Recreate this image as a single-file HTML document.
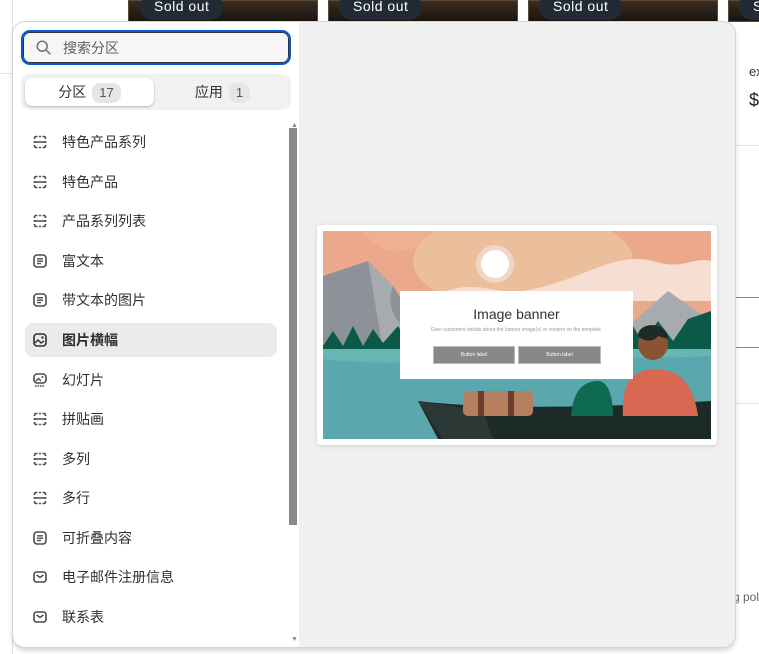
<!DOCTYPE html>
<html><head><meta charset="utf-8"><style>
*{box-sizing:border-box;margin:0;padding:0}
body{width:759px;height:654px;overflow:hidden;background:#fff;font-family:"Liberation Sans","Noto Sans CJK SC",sans-serif;position:relative}
.tile{position:absolute;top:0;height:22px;background:linear-gradient(#3a2c22,#1a1410);border:1px solid #5a4a35}
.pill{position:absolute;top:-6px;height:26px;border-radius:13px;background:#222a35;color:#fff;font-size:14px;line-height:24px;padding:0 14px;letter-spacing:.5px}
.pop{position:absolute;left:13px;top:22px;width:722px;height:625px;border-radius:12px;background:#f0f0f0;overflow:hidden;box-shadow:0 0 0 1px #d4d4d4,0 3px 6px rgba(0,0,0,.2)}
.left{position:absolute;left:0;top:0;width:286px;height:625px;background:#fff}
.search{position:absolute;left:8px;top:8px;width:270px;height:35px;border:2px solid #005bd3;border-radius:9px;background:#f6f6f6;box-shadow:inset 0 0 0 1px #333}
.search span{position:absolute;left:40px;top:6px;font-size:14px;color:#616161}
.tabs{position:absolute;left:8px;top:52px;width:270px;height:36px;background:#f1f1f1;border-radius:9px}
.tab{position:absolute;top:4px;height:28px;width:129px;border-radius:7px;font-size:14px;color:#303030;text-align:center;line-height:28px}
.tab.a{left:4px;background:#fff;box-shadow:0 1px 2px rgba(0,0,0,.25)}
.badge{display:inline-block;background:#e6e6e6;border-radius:8px;padding:0 7px;font-size:13px;line-height:20px;margin-left:6px;color:#555}
.item{position:absolute;left:12px;width:252px;height:34px;border-radius:8px;font-size:14px;color:#303030;line-height:34px;padding-left:37px}
.item.sel{background:#ebebeb;font-weight:bold}
.item svg{position:absolute;left:8px;top:10px}
.sb{position:absolute;left:276px;top:106px;width:8px;height:397px;background:#8a8a8a}
</style></head><body>
<svg width="0" height="0" style="position:absolute"><defs>
<symbol id="dash" viewBox="0 0 14 14"><path d="M1.5 4V3A1.5 1.5 0 0 1 3 1.5H4.5M6 1.5H8M9.5 1.5H11A1.5 1.5 0 0 1 12.5 3V4M1.5 10V11A1.5 1.5 0 0 0 3 12.5H4.5M6 12.5H8M9.5 12.5H11A1.5 1.5 0 0 0 12.5 11V10M1.5 6V8M12.5 6V8M1.5 7H12.5" fill="none" stroke="#4a4a4a" stroke-width="1.6"/></symbol>
<symbol id="txt" viewBox="0 0 14 14"><rect x="1" y="1" width="12" height="12" rx="3" fill="none" stroke="#4a4a4a" stroke-width="1.6"/><path d="M4 4.8H10M4 7.2H10M4 9.6H8" stroke="#4a4a4a" stroke-width="1.4"/></symbol>
<symbol id="mail" viewBox="0 0 14 14"><rect x="1" y="2" width="12" height="10" rx="2.5" fill="none" stroke="#4a4a4a" stroke-width="1.6"/><path d="M3.5 5L7 7.5L10.5 5" fill="none" stroke="#4a4a4a" stroke-width="1.4"/></symbol>
</defs></svg>
<div style="position:absolute;left:0;top:0;width:13px;height:654px;background:#fff;border-right:1px solid #e3e3e3"></div>
<div style="position:absolute;left:0;top:73px;width:40px;height:1px;background:#e3e3e3"></div>
<div class="tile" style="left:128px;width:190px"></div>
<div class="tile" style="left:328px;width:190px"></div>
<div class="tile" style="left:528px;width:190px"></div>
<div class="tile" style="left:728px;width:40px"></div>
<div class="pill" style="left:140px">Sold out</div>
<div class="pill" style="left:339px">Sold out</div>
<div class="pill" style="left:539px">Sold out</div>
<div class="pill" style="left:739px">S</div>
<div style="position:absolute;left:749px;top:64px;font-size:13px;color:#333">ex</div>
<div style="position:absolute;left:749px;top:90px;font-size:18px;color:#222">$</div>
<div style="position:absolute;left:735px;top:145px;width:30px;height:1px;background:#e3e3e3"></div>
<div style="position:absolute;left:735px;top:297px;width:30px;height:1px;background:#888"></div>
<div style="position:absolute;left:735px;top:347px;width:30px;height:1px;background:#888"></div>
<div style="position:absolute;left:735px;top:403px;width:30px;height:1px;background:#e3e3e3"></div>
<div style="position:absolute;left:733px;top:590px;font-size:12px;color:#666;white-space:nowrap">g pol</div>

<div class="pop">
<div class="left">
<div class="search"><svg width="18" height="18" style="position:absolute;left:12px;top:7px" viewBox="0 0 20 20"><circle cx="8" cy="8" r="5.5" fill="none" stroke="#777" stroke-width="1.8"/><path d="M12 12l4.5 4.5" stroke="#777" stroke-width="1.8" stroke-linecap="round"/></svg><span>搜索分区</span></div>
<div class="tabs"><div class="tab a">分区<span class="badge">17</span></div><div class="tab" style="left:137px">应用<span class="badge">1</span></div></div>
<div style="position:absolute;left:278px;top:100px;font-size:7px;color:#888">▲</div>
<div class="sb"></div>
<div style="position:absolute;left:278px;top:614px;font-size:7px;color:#888">▼</div>
</div>
<div style="position:absolute;left:304px;top:203px;width:400px;height:220px;background:#fff;border-radius:4px;box-shadow:0 1px 4px rgba(0,0,0,.15)">
<svg width="388" height="208" style="position:absolute;left:6px;top:6px" viewBox="0 0 388 208">
<rect width="388" height="208" fill="#eba88a"/>
<path d="M40 0 C60 30 90 20 110 10 L110 0Z" fill="#eeb08f"/>
<ellipse cx="200" cy="30" rx="110" ry="50" fill="#ebbf9c"/>
<path d="M100 75 C140 40 170 65 200 60 C260 50 290 20 330 30 C360 40 370 25 388 30 V70 H100Z" fill="#f6dfd2"/>
<circle cx="172" cy="33" r="19" fill="#f1d6c8"/><circle cx="172" cy="33" r="14" fill="#fff"/>
<path d="M0 45 L45 30 L70 55 C80 70 90 90 110 100 L110 130 H0Z" fill="#8d9298"/>
<path d="M45 30 L70 55 C60 80 80 100 100 110 L60 120 Z" fill="#a7aaaf"/>
<path d="M300 100 L345 60 L388 90 V130 H300Z" fill="#a7aaaf"/>
<path d="M0 115 L10 100 L20 115 L30 95 L40 115 L50 98 L60 112 L75 95 L90 120 H0Z M300 120 L310 95 L320 112 L335 90 L350 110 L365 88 L388 80 V125 H300Z" fill="#0b5a48"/>
<rect x="0" y="118" width="388" height="90" fill="#5aa8ae"/>
<path d="M0 118 H388 V125 C300 130 250 120 200 125 C120 130 60 135 0 128Z" fill="#66b6b4"/>
<path d="M95 170 C180 180 300 175 388 170 V208 H115Z" fill="#1c2b28"/>
<path d="M95 170 L160 180 L170 208 H120Z" fill="#2b3836"/>
<rect x="140" y="160" width="70" height="25" rx="5" fill="#b57f5f"/>
<rect x="155" y="160" width="6" height="25" fill="#6b3b2b"/><rect x="185" y="160" width="6" height="25" fill="#6b3b2b"/>
<path d="M248 185 C250 160 260 150 275 150 C285 150 290 165 290 185Z" fill="#0e6a50"/>
<path d="M300 185 C298 150 310 140 330 138 C355 138 370 150 375 185Z" fill="#d96853"/>
<ellipse cx="330" cy="113" rx="15" ry="16" fill="#8b5335"/>
<path d="M315 105 C315 90 345 90 345 108 L335 105 C330 112 320 110 315 105Z" fill="#1d2a25"/>
</svg>
<div style="position:absolute;left:83px;top:66px;width:233px;height:88px;background:#fff;text-align:center">
<div style="font-size:14px;color:#333;margin-top:15px">Image banner</div>
<div style="font-size:5px;color:#999;margin-top:5px">Give customers details about the banner image(s) or content on the template.</div>
<div style="position:absolute;left:33px;top:55px;width:82px;height:18px;background:#888;border:1px solid #bbb;color:#fff;font-size:5px;line-height:16px">Button label</div>
<div style="position:absolute;left:118px;top:55px;width:83px;height:18px;background:#888;border:1px solid #bbb;color:#fff;font-size:5px;line-height:16px">Button label</div>
</div>
</div>
</div>

<div style="position:absolute;left:13px;top:22px">
<div class="item" style="top:103px"><svg width="14" height="14"><use href="#dash"/></svg>特色产品系列</div>
<div class="item" style="top:143px"><svg width="14" height="14"><use href="#dash"/></svg>特色产品</div>
<div class="item" style="top:182px"><svg width="14" height="14"><use href="#dash"/></svg>产品系列列表</div>
<div class="item" style="top:222px"><svg width="14" height="14"><use href="#txt"/></svg>富文本</div>
<div class="item" style="top:261px"><svg width="14" height="14"><use href="#txt"/></svg>带文本的图片</div>
<div class="item sel" style="top:301px"><svg width="14" height="14" viewBox="0 0 14 14"><rect x="1" y="1" width="12" height="12" rx="3" fill="none" stroke="#303030" stroke-width="1.6"/><path d="M2 10L5 7L8 10L11 8" fill="none" stroke="#303030" stroke-width="1.4"/><circle cx="9.5" cy="4.5" r="1.2" fill="#303030"/></svg>图片横幅</div>
<div class="item" style="top:341px"><svg width="14" height="14" viewBox="0 0 14 14"><rect x="1" y="1" width="12" height="9" rx="3" fill="none" stroke="#4a4a4a" stroke-width="1.6"/><path d="M3 8L5.5 5.5L8 8" fill="none" stroke="#4a4a4a" stroke-width="1.4"/><circle cx="9.5" cy="4" r="1" fill="#4a4a4a"/><path d="M2 13H12" stroke="#4a4a4a" stroke-width="1.4" stroke-dasharray="1.5 1"/></svg>幻灯片</div>
<div class="item" style="top:380px"><svg width="14" height="14"><use href="#dash"/></svg>拼贴画</div>
<div class="item" style="top:420px"><svg width="14" height="14"><use href="#dash"/></svg>多列</div>
<div class="item" style="top:459px"><svg width="14" height="14"><use href="#dash"/></svg>多行</div>
<div class="item" style="top:499px"><svg width="14" height="14"><use href="#txt"/></svg>可折叠内容</div>
<div class="item" style="top:538px"><svg width="14" height="14"><use href="#mail"/></svg>电子邮件注册信息</div>
<div class="item" style="top:578px"><svg width="14" height="14"><use href="#mail"/></svg>联系表</div>
</div>
</body></html>
